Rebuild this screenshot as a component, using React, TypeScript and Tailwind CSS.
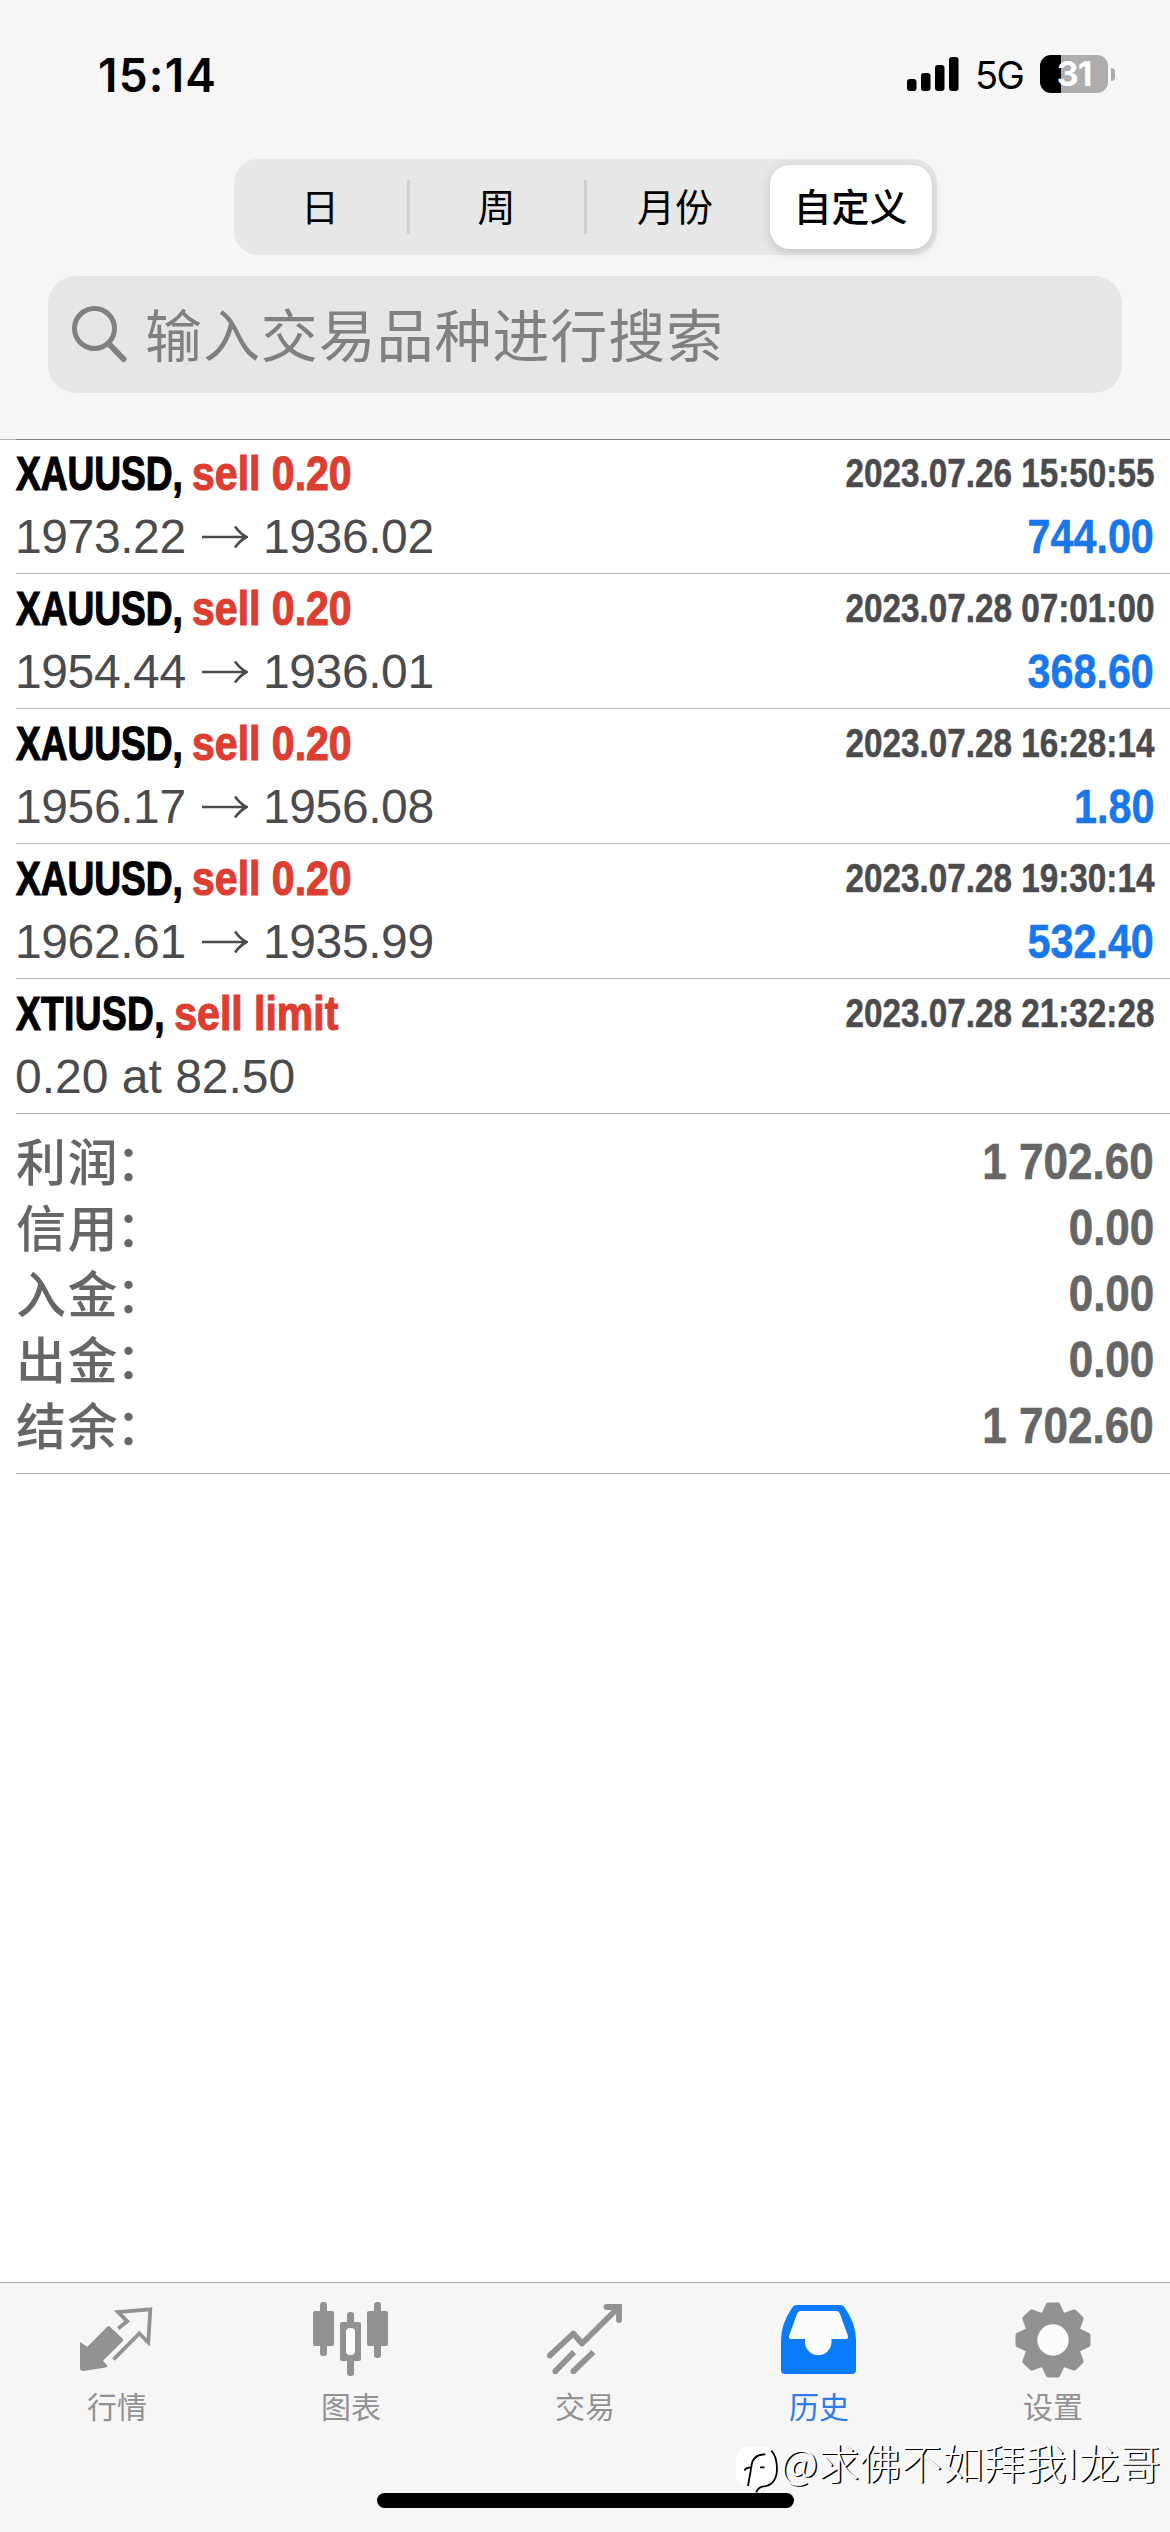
import type { ReactNode } from "react";
import clsx from "clsx";

type Deal = {
  symbol: string;
  side: string;
  time: string;
  open?: string;
  close?: string;
  note?: string;
  profit?: string;
};

const deals: Deal[] = [
  { symbol: "XAUUSD,", side: "sell 0.20", time: "2023.07.26 15:50:55", open: "1973.22", close: "1936.02", profit: "744.00" },
  { symbol: "XAUUSD,", side: "sell 0.20", time: "2023.07.28 07:01:00", open: "1954.44", close: "1936.01", profit: "368.60" },
  { symbol: "XAUUSD,", side: "sell 0.20", time: "2023.07.28 16:28:14", open: "1956.17", close: "1956.08", profit: "1.80" },
  { symbol: "XAUUSD,", side: "sell 0.20", time: "2023.07.28 19:30:14", open: "1962.61", close: "1935.99", profit: "532.40" },
  { symbol: "XTIUSD,", side: "sell limit", time: "2023.07.28 21:32:28", note: "0.20 at 82.50" },
];

const summary = [
  { label: "利润", value: "1 702.60" },
  { label: "信用", value: "0.00" },
  { label: "入金", value: "0.00" },
  { label: "出金", value: "0.00" },
  { label: "结余", value: "1 702.60" },
];

function StatusBar() {
  return (
    <div className="flex h-[159px] items-start justify-between pl-[98px] pr-[55px] pt-[50px]">
      <span className="font-['Inter',sans-serif] text-[46px] font-semibold leading-[50px] tracking-[1.200px] text-black">
        15:14
      </span>
      <div className="flex h-[48px] items-center">
        <svg width="52" height="36" viewBox="0 0 52 36">
          <rect x="0" y="23" width="9.5" height="12" rx="3" />
          <rect x="14" y="17" width="9.5" height="18" rx="3" />
          <rect x="28" y="9" width="9.5" height="26" rx="3" />
          <rect x="42" y="1" width="9.5" height="34" rx="3" />
        </svg>
        <span className="ml-[16px] w-[49px] pt-[2px] font-['Inter',sans-serif] text-[38px] leading-[48px] tracking-[-1.5px] text-black">
          5G
        </span>
        <div className="ml-[16px] flex h-[38px] w-[68px] items-center justify-center rounded-[11px] bg-[linear-gradient(90deg,#000_31%,#adadad_31%)]">
          <span className="font-['Inter',sans-serif] text-[34px] font-bold leading-[38px] tracking-[-1px] text-white">31</span>
        </div>
        <div className="ml-[3px] h-[13px] w-[4px] rounded-r-full bg-[#adadad]" />
      </div>
    </div>
  );
}

function PeriodPicker() {
  return (
    <div className="mx-auto flex h-[96px] w-[703px] items-center rounded-[24px] bg-[#e7e7e7] text-[38px] leading-[54px] text-black">
      <span className="w-[173px] pb-[5px] text-center">日</span>
      <span className="h-[54px] w-[3px] bg-[#d0d0d1]" />
      <span className="w-[174px] pb-[5px] text-center">周</span>
      <span className="h-[54px] w-[3px] bg-[#d0d0d1]" />
      <span className="w-[177px] pb-[5px] text-center">月份</span>
      <span className="ml-[6px] flex h-[84px] w-[162px] items-center justify-center rounded-[20px] bg-white pb-[5px] font-medium shadow-[0_3px_12px_rgba(0,0,0,0.16)]">
        自定义
      </span>
    </div>
  );
}

function SearchBar() {
  return (
    <div className="mx-[48px] mt-[21px] flex h-[117px] items-center rounded-[28px] bg-[#e6e6e8] pl-[22px]">
      <svg width="60" height="60" viewBox="0 0 60 60" fill="none" stroke="#808083" strokeLinecap="round">
        <circle cx="24.5" cy="23.5" r="20" strokeWidth="5" />
        <path d="M39 39L53.500 54" strokeWidth="6" />
      </svg>
      <span className="ml-[15px] pb-[6px] text-[57px] leading-[80px] tracking-[0.9px] text-[#808083]">
        输入交易品种进行搜索
      </span>
    </div>
  );
}

function DealRow({ deal }: { deal: Deal }) {
  return (
    <div className="h-[135px] border-b border-[#b8b8ba] pr-4 pt-[3px] font-['Liberation_Sans',sans-serif]">
      <div className="flex h-[63px] items-center justify-between font-bold leading-[63px]">
        <div className="flex origin-left scale-x-[0.772] text-[48px] [-webkit-text-stroke:1.200px_currentColor]">
          <span className={clsx("text-black", deal.note && "tracking-[0.5px]")}>{deal.symbol}</span>
          <span className="ml-[12px] origin-left scale-x-[1.107] whitespace-nowrap text-[#dc3f31]">{deal.side}</span>
        </div>
        <span className="origin-right scale-x-[0.832] text-[40px] text-[#4b4b4e] [-webkit-text-stroke:0.5px_currentColor]">
          {deal.time}
        </span>
      </div>
      <div className="flex h-[63px] items-center justify-between text-[48px] leading-[63px]">
        {deal.note ? (
          <span className="-ml-[1px] text-[#4b4b4e]">{deal.note}</span>
        ) : (
          <div className="-ml-[1px] flex items-center tracking-[-0.4px] text-[#4b4b4e]">
            <span className="w-[187px]">{deal.open}</span>
            <svg width="46" height="24" viewBox="0 0 46 24" fill="none" stroke="currentColor" strokeWidth="2.600">
              <path d="M0 12H44M33 1.500Q38 8.500 44.500 12Q38 15.500 33 22.500" />
            </svg>
            <span className="ml-[15px]">{deal.close}</span>
          </div>
        )}
        <span className="origin-right scale-x-[0.86] font-bold text-[#1877ea] [-webkit-text-stroke:0.6px_currentColor]">
          {deal.profit}
        </span>
      </div>
    </div>
  );
}

function Summary() {
  return (
    <div className="border-b border-[#b8b8ba] pb-[14px] pr-4 pt-[15px] text-[#666]">
      {summary.map((line) => (
        <div key={line.label} className="flex h-[66px] items-center justify-between">
          <div className="flex items-center pb-[7px] text-[50px] font-medium leading-[66px]">
            <span className="tracking-[1.500px]">{line.label}</span>
            <span className="-ml-[3px]">：</span>
          </div>
          <span className="origin-right scale-x-[0.88] font-['Liberation_Sans',sans-serif] text-[50px] font-bold leading-[66px] [-webkit-text-stroke:0.6px_currentColor]">
            {line.value}
          </span>
        </div>
      ))}
    </div>
  );
}

function QuotesIcon() {
  return (
    <svg width="80" height="80" viewBox="0 0 80 80">
      <path
        d="M3 42L10.300 46.700L30 27Q31.500 25.300 33 26.800L45.500 38.500Q47 40 45.500 41.500L26 60.700L30.300 65.500Q30.500 67 29 67.500L6.300 71Q3 71 3 68Z"
        fill="currentColor"
      />
      <path
        d="M41.300 28.500L50.300 21.300L41 12L73.300 9.300L71.300 42.500L62.300 33.500L36.500 59.500"
        fill="none"
        stroke="currentColor"
        strokeWidth="3.800"
      />
    </svg>
  );
}

function ChartIcon() {
  return (
    <svg width="80" height="80" viewBox="0 0 80 80" fill="currentColor">
      <rect x="9" y="2" width="7" height="54" rx="3" />
      <rect x="2" y="11" width="21" height="35" rx="2" />
      <rect x="36" y="12" width="7" height="64" rx="3" />
      <rect x="29" y="22" width="21" height="39" rx="2" />
      <rect x="35" y="28" width="9" height="27" rx="4" fill="#fcfcfc" />
      <rect x="63" y="2" width="7" height="56" rx="3" />
      <rect x="56" y="11" width="21" height="35" rx="2" />
    </svg>
  );
}

function TradeIcon() {
  return (
    <svg width="80" height="80" viewBox="0 0 80 80" fill="none" stroke="currentColor" strokeWidth="5.800">
      <path d="M4.700 55.700L28.300 33.500L37 43.500L73 8" strokeLinejoin="round" />
      <path d="M61.500 7H74V20" strokeLinecap="round" />
      <path d="M10.300 71.300L29 52M28.300 71.300L48.300 52" />
      <g fill="currentColor" stroke="none">
        <circle cx="4.900" cy="55.500" r="2.900" />
        <circle cx="10.400" cy="71.200" r="2.900" />
        <circle cx="28.400" cy="71.200" r="2.900" />
      </g>
    </svg>
  );
}

function HistoryIcon() {
  return (
    <svg width="80" height="80" viewBox="0 0 80 80">
      <path
        d="M18 5H61Q64.500 5 66 8Q77 24 77 40V70Q77 74 73 74H6Q2 74 2 70V40Q2 24 13 8Q14.500 5 18 5Z"
        fill="#0a7bfb"
      />
      <path
        d="M22 11H57Q60 11 61 14L69 36Q69.500 39 67 39H52.500V42A13.200 13.200 0 0 1 26 42V39H12Q9.500 39 10 36L18 14Q19 11 22 11Z"
        fill="#fcfcfc"
      />
    </svg>
  );
}

function GearIcon() {
  return (
    <svg width="80" height="80" viewBox="0 0 80 80" fill="currentColor">
      <circle cx="40" cy="40" r="29" />
      {[0, 45, 90, 135, 180, 225, 270, 315].map((angle) => (
        <path
          key={angle}
          d="M30.500 15L35.300 5H44.700L49.500 15Z"
          stroke="currentColor"
          strokeWidth="5"
          strokeLinejoin="round"
          transform={`rotate(${angle} 40 40)`}
        />
      ))}
      <circle cx="40" cy="40" r="15.700" fill="#fcfcfc" />
    </svg>
  );
}

function Tab({ label, active, children }: { label: string; active?: boolean; children: ReactNode }) {
  return (
    <div className={clsx("flex w-[234px] flex-col items-center", active ? "text-[#2f7bea]" : "text-[#929292]")}>
      {children}
      <span className="mt-[3px] text-[30px] leading-[44px]">{label}</span>
    </div>
  );
}

function Watermark() {
  return (
    <div className="absolute right-[9px] top-[2440px] flex items-start">
      <svg width="46" height="54" viewBox="0 0 46 54" fill="none" stroke="#000" strokeWidth="1.800">
        <rect x="2" y="7" width="40" height="39" rx="12" fill="#fff" stroke="none" />
        <path d="M37.300 10.700Q43 16 43 30Q42 46 28 46.700Q24 48 22.300 52.300" />
        <path d="M14 46L17.500 26Q18.500 14.300 31.300 14.300M10.700 30.700Q11 27.300 18 27.300M26 27.300H30.500" />
      </svg>
      <span className="-mt-[4px] ml-[1px] text-[41px] font-light leading-[50px] tracking-[0.4px] text-white [text-shadow:1.500px_1px_0_#000]">
        @求佛不如拜我I龙哥
      </span>
    </div>
  );
}

export default function App() {
  return (
    <div className="relative flex h-[2532px] w-[1170px] flex-col overflow-hidden bg-white font-['Noto_Sans_CJK_SC',sans-serif]">
      <header className="h-[440px] shrink-0 border-b border-[#b2b2b4] bg-[#f6f6f6]">
        <StatusBar />
        <PeriodPicker />
        <SearchBar />
      </header>

      <main className="-mt-px flex-1 pl-4">
        <div className="-mb-px h-px bg-[#808082]" />
        {deals.map((deal) => (
          <DealRow key={deal.time} deal={deal} />
        ))}
        <Summary />
      </main>

      <nav className="h-[250px] shrink-0 border-t border-[#a9a9ab] bg-[#f6f6f6] pt-[17px]">
        <div className="flex">
          <Tab label="行情">
            <QuotesIcon />
          </Tab>
          <Tab label="图表">
            <ChartIcon />
          </Tab>
          <Tab label="交易">
            <TradeIcon />
          </Tab>
          <Tab label="历史" active>
            <HistoryIcon />
          </Tab>
          <Tab label="设置">
            <GearIcon />
          </Tab>
        </div>
        <div className="mx-auto mt-[66px] h-[15px] w-[417px] rounded-full bg-black" />
      </nav>

      <Watermark />
    </div>
  );
}
